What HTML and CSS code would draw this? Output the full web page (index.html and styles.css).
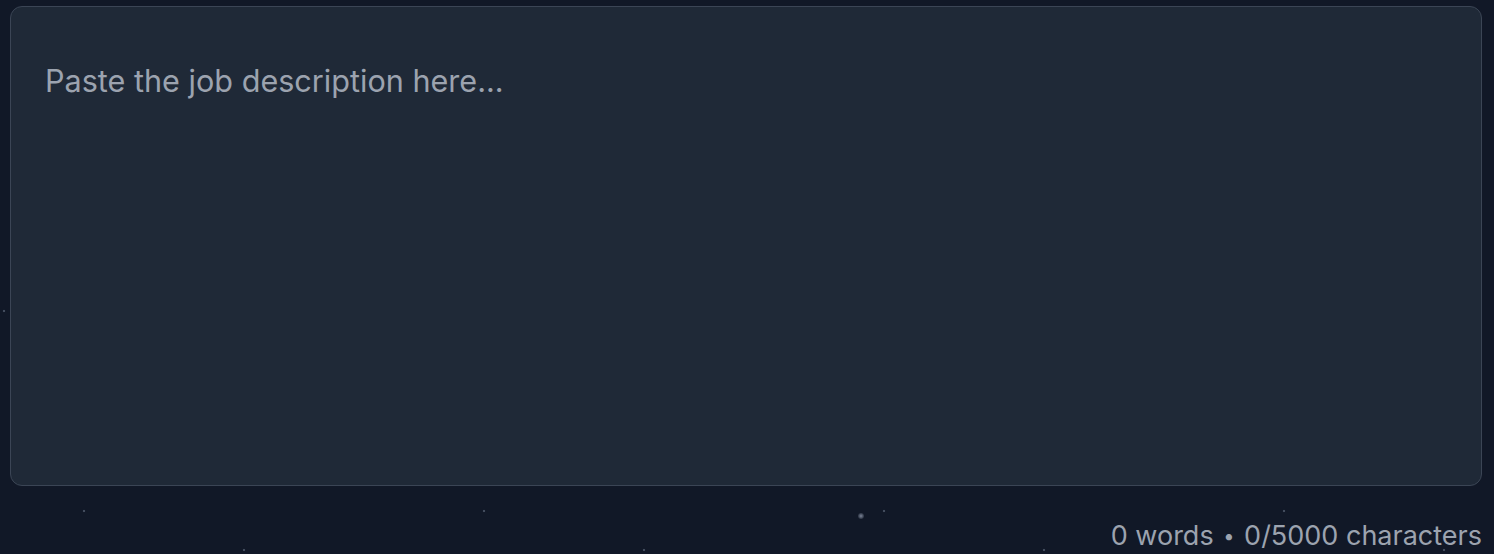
FILE: index.html
```html
<!DOCTYPE html>
<html>
<head>
<meta charset="utf-8">
<link rel="stylesheet" href="styles.css">
</head>
<body>
<div class="stars"></div>
<main class="wrap">
  <textarea class="jd" placeholder="Paste the job description here..."></textarea>
  <div class="counter">0 words <span class="sep">•</span> 0/5000 characters</div>
</main>
</body>
</html>
```
FILE: styles.css
```css
html, body {
  margin: 0;
  height: 100%;
}
body {
  background-color: #111827;
  background-image: radial-gradient(circle at 84px 111px, rgba(148,163,184,0.55) 0, rgba(148,163,184,0.3) 1px, transparent 1.6px),
    radial-gradient(circle at 244px 150px, rgba(148,163,184,0.55) 0, rgba(148,163,184,0.3) 1px, transparent 1.6px),
    radial-gradient(circle at 4px 311px, rgba(148,163,184,0.55) 0, rgba(148,163,184,0.3) 1px, transparent 1.6px);
  background-size: 400px 400px;
  font-family: Inter, "Liberation Sans", sans-serif;
  overflow: hidden;
}
.stars {
  position: absolute;
  left: 858px;
  top: 513px;
  width: 6px;
  height: 6px;
  border-radius: 50%;
  background: radial-gradient(circle, rgba(170,180,200,0.7) 0, rgba(170,180,200,0.25) 60%, transparent 100%);
}
.wrap {
  display: flex;
  flex-direction: column;
  padding: 6px 12px 0 10px;
}
.jd {
  box-sizing: border-box;
  width: 100%;
  height: 480px;
  resize: none;
  background: #1f2937;
  border: 1px solid #3b4555;
  border-radius: 12px;
  padding: 51px 34px;
  color: #e5e7eb;
  font-family: Inter, "Liberation Sans", sans-serif;
  font-size: 30.6px;
  line-height: 1.5;
  outline: none;
}
.jd::placeholder {
  color: #9ca3af;
}
.counter {
  align-self: flex-end;
  margin-top: 32px;
  color: #9ca3af;
  font-size: 27px;
  line-height: 36px;
  white-space: nowrap;
}
.sep {
  font-size: 20px;
  padding: 0 2px;
  vertical-align: 2px;
}
```
